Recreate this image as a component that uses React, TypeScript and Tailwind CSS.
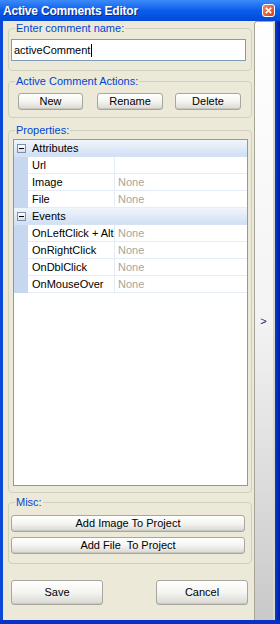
import React from 'react';

const Btn = ({ label, className = '' }: { label: string; className?: string }) => (
  <button
    className={`flex items-center justify-center rounded-[3px] border border-[#A7A7A0] bg-gradient-to-b from-white via-[#F4F4F1] to-[#D9D8D2] text-black leading-none shadow-[inset_0_-1px_0_#C8C7C0] ${className}`}
  >
    {label}
  </button>
);

const Group = ({ title, className = '', children }: { title: string; className?: string; children: React.ReactNode }) => (
  <fieldset className={`ml-[5px] w-[244px] rounded-[4px] border border-[#D0D0BF] ${className}`}>
    <legend className="ml-[6px] px-[1px] leading-[13px] text-[#0046D5]">{title}</legend>
    {children}
  </fieldset>
);

const Minus = () => (
  <div className="flex h-[9px] w-[9px] items-center justify-center border border-[#7A8FAE] bg-gradient-to-b from-white to-[#D8DEE8]">
    <div className="h-[1px] w-[5px] bg-black" />
  </div>
);

const Category = ({ label }: { label: string }) => (
  <div className="flex h-[17px] items-center border-b border-[#D6E2F3] bg-gradient-to-b from-[#F0F5FC] to-[#D1E0F4]">
    <div className="flex w-[14px] justify-center pl-[1px]">
      <Minus />
    </div>
    <span className="pl-[4px]">{label}</span>
  </div>
);

const Prop = ({ name, value }: { name: string; value?: string }) => (
  <div className="flex h-[17px]">
    <div className="w-[14px] bg-[#C6D7EF]" />
    <div className="flex w-[87px] items-center border-b border-r border-[#E4ECF7] pl-[4px]">{name}</div>
    <div className="flex flex-1 items-center border-b border-[#E4ECF7] pl-[3px] text-[#A8A69C]">{value}</div>
  </div>
);

export default function App() {
  return (
    <div className="flex h-[624px] w-[280px] flex-col overflow-hidden font-['Liberation_Sans',Arial,sans-serif] text-[11px] text-black">
      <div className="flex h-[21px] shrink-0 items-center justify-between bg-gradient-to-b from-[#3C8BFA] via-[#0A5DEB] to-[#0548D6] pl-[3px] pr-[5px]">
        <span className="text-[12px] font-bold tracking-[-0.2px] text-white [text-shadow:1px_1px_0_#0A2C8C]">
          Active Comments Editor
        </span>
        <div className="flex h-[13px] w-[13px] items-center justify-center rounded-[3px] border border-white bg-gradient-to-br from-[#F08A6A] to-[#D23C14]">
          <svg width="7" height="7" viewBox="0 0 7 7">
            <path d="M0.8 0.8 L6.2 6.2 M6.2 0.8 L0.8 6.2" stroke="white" strokeWidth="1.7" />
          </svg>
        </div>
      </div>

      <div className="flex min-h-0 flex-1">
        <div className="w-[3px] bg-[#0A48D8]" />

        <div className="flex w-[251px] flex-col bg-[#ECE9D8]">
          <Group title="Enter comment name:" className="mt-[1px] pb-[9px]">
            <div className="ml-[2px] mt-[4px] flex h-[22px] w-[235px] items-center border border-[#7F9DB9] bg-white pl-[2px]">
              <span>activeComment</span>
              <span className="ml-[1px] h-[13px] w-[1px] bg-black" />
            </div>
          </Group>

          <Group title="Active Comment Actions:" className="mt-[4px] pb-[7px]">
            <div className="mt-[5px] flex">
              <Btn label="New" className="ml-[9px] h-[17px] w-[65px]" />
              <Btn label="Rename" className="ml-[14px] h-[17px] w-[66px]" />
              <Btn label="Delete" className="ml-[12px] h-[17px] w-[66px]" />
            </div>
          </Group>

          <Group title="Properties:" className="mt-[6px] pb-[6px]">
            <div className="ml-[4px] mt-[2px] h-[347px] w-[235px] border border-[#7F9DB9] bg-white">
              <Category label="Attributes" />
              <Prop name="Url" />
              <Prop name="Image" value="None" />
              <Prop name="File" value="None" />
              <Category label="Events" />
              <Prop name="OnLeftClick + Alt" value="None" />
              <Prop name="OnRightClick" value="None" />
              <Prop name="OnDblClick" value="None" />
              <Prop name="OnMouseOver" value="None" />
            </div>
          </Group>

          <Group title="Misc:" className="mt-[3px] pb-[9px]">
            <Btn label="Add Image To Project" className="ml-[2px] mt-[6px] h-[17px] w-[234px]" />
            <Btn label="Add File  To Project" className="ml-[2px] mt-[5px] h-[17px] w-[234px] whitespace-pre" />
          </Group>

          <div className="mt-[16px] flex">
            <Btn label="Save" className="ml-[8px] h-[25px] w-[92px]" />
            <Btn label="Cancel" className="ml-[53px] h-[25px] w-[92px]" />
          </div>
        </div>

        <div className="flex w-[19px] items-center justify-center rounded-tl-[3px] border-l border-t border-[#A5A59A] bg-gradient-to-b from-white via-[#F3F3F3] to-[#C9C9C9] pr-[1px]">
          <span className="text-[11px] text-[#1A2A6A]">&gt;</span>
        </div>
        <div className="w-[2px] bg-[#D9D6CC]" />
        <div className="w-[5px] bg-gradient-to-r from-[#0A3CC8] to-[#0019B0]" />
      </div>

      <div className="h-[4px] shrink-0 bg-[#0831C8]" />
    </div>
  );
}
